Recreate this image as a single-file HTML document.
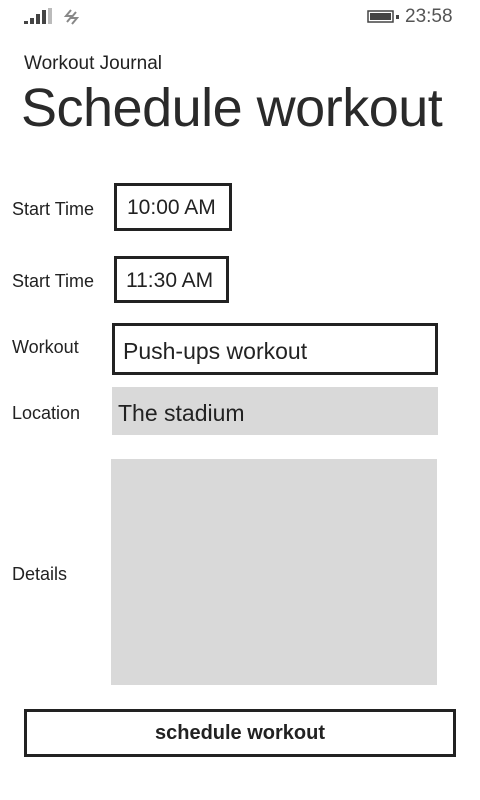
<!DOCTYPE html>
<html><head><meta charset="utf-8"><style>
body{margin:0;width:480px;height:800px;background:#fff;position:relative;overflow:hidden;font-family:"Liberation Sans",sans-serif;color:#222}
.a{position:absolute;white-space:nowrap}
.lbl{font-size:18px;color:#222}
.box{position:absolute;box-sizing:border-box;border:3px solid #222;background:#fff}
.g{position:absolute;background:#d9d9d9}
</style></head><body>
<svg class="a" style="left:24px;top:8px" width="60" height="20">
<rect x="0" y="13" width="4" height="3" fill="#444"/>
<rect x="6" y="10" width="4" height="6" fill="#444"/>
<rect x="12" y="6" width="4" height="10" fill="#444"/>
<rect x="18" y="2" width="4" height="14" fill="#444"/>
<rect x="24" y="0" width="4" height="16" fill="#bbb"/>
<path d="M47 2 L42 8 L48 8 L43 14 M52 4 L47 10 L53 10 L48 16" stroke="#888" stroke-width="2" fill="none"/>
</svg>
<svg class="a" style="left:367px;top:10px" width="34" height="14">
<rect x="1" y="1" width="25" height="11" fill="none" stroke="#444" stroke-width="1.5"/>
<rect x="3" y="3" width="21" height="7" fill="#444"/>
<rect x="29" y="5" width="3" height="4" fill="#444"/>
</svg>
<div class="a" style="left:405px;top:6px;font-size:19px;color:#555">23:58</div>
<div class="a" style="left:24px;top:53px;font-size:19px">Workout Journal</div>
<div class="a" style="left:21px;top:77px;font-size:54px;letter-spacing:-0.5px;color:#2a2a2a">Schedule workout</div>

<div class="a lbl" style="left:12px;top:199px">Start Time</div>
<div class="box" style="left:114px;top:183px;width:118px;height:48px"></div>
<div class="a" style="left:127px;top:196px;font-size:21px">10:00 AM</div>

<div class="a lbl" style="left:12px;top:271px">Start Time</div>
<div class="box" style="left:114px;top:256px;width:115px;height:47px"></div>
<div class="a" style="left:126px;top:269px;font-size:21px">11:30 AM</div>

<div class="a lbl" style="left:12px;top:337px">Workout</div>
<div class="box" style="left:112px;top:323px;width:326px;height:52px"></div>
<div class="a" style="left:123px;top:338px;font-size:23px">Push-ups workout</div>

<div class="a lbl" style="left:12px;top:403px">Location</div>
<div class="g" style="left:112px;top:387px;width:326px;height:48px"></div>
<div class="a" style="left:118px;top:400px;font-size:23px">The stadium</div>

<div class="a lbl" style="left:12px;top:564px">Details</div>
<div class="g" style="left:111px;top:459px;width:326px;height:226px"></div>

<div class="box" style="left:24px;top:709px;width:432px;height:48px"></div>
<div class="a" style="left:0;width:480px;text-align:center;top:722px;font-size:20px;font-weight:bold;color:#222">schedule workout</div>
</body></html>
